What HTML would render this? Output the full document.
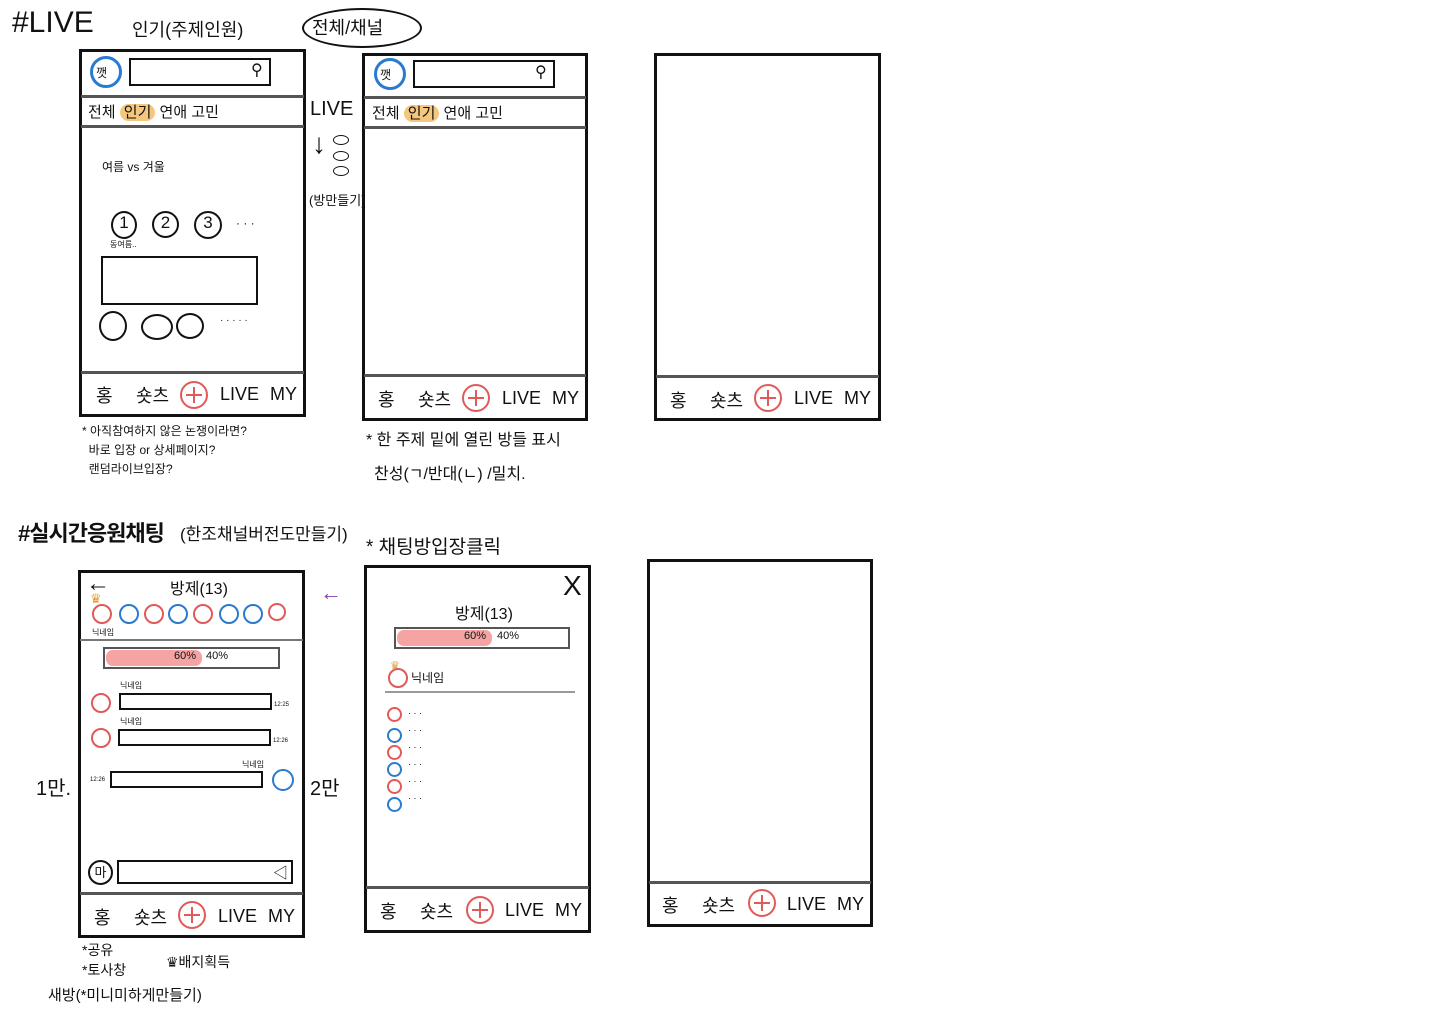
<!DOCTYPE html>
<html><head><meta charset="utf-8"><style>
body{margin:0;width:1440px;height:1018px;background:#fff;position:relative;overflow:hidden;font-family:"Liberation Sans","Noto Sans CJK KR",sans-serif;color:#111}
.a{position:absolute}
.f{position:absolute;border:3px solid #111;box-sizing:border-box}
.hl{position:absolute;height:3px;background:#555}
.t{position:absolute;white-space:nowrap}
.c{position:absolute;border-radius:50%;box-sizing:border-box}
.r{border:2px solid #e05a5a}.b{border:2px solid #2a7ad0}.k{border:2px solid #111}
.nav{position:absolute;font-size:18px;white-space:nowrap}
.plus{position:absolute;width:28px;height:28px;border:2px solid #e05a5a;border-radius:50%;box-sizing:border-box}
.plus:before{content:"";position:absolute;left:4px;right:4px;top:11px;height:2px;background:#e05a5a}
.plus:after{content:"";position:absolute;top:4px;bottom:4px;left:11px;width:2px;background:#e05a5a}
.box{position:absolute;border:2px solid #111;box-sizing:border-box}
.pill{background:#f5c77e;border-radius:9px;padding:0 4px}
</style></head><body>

<div class="t" style="left:12px;top:6px;font-size:30px">#LIVE</div>
<div class="t" style="left:132px;top:16px;font-size:18px">인기(주제인원)</div>
<div class="a" style="left:302px;top:8px;width:116px;height:36px;border:2px solid #111;border-radius:50%"></div>
<div class="t" style="left:312px;top:14px;font-size:18px">전체/채널</div>

<!-- frame 1 -->
<div class="f" style="left:79px;top:49px;width:227px;height:368px"></div>
<div class="c b" style="left:90px;top:56px;width:32px;height:32px;border-width:3px"></div>
<div class="t" style="left:96px;top:64px;font-size:12px">깻</div>
<div class="box" style="left:129px;top:58px;width:142px;height:28px"></div>
<div class="t" style="left:251px;top:60px;font-size:16px">⚲</div>
<div class="hl" style="left:81px;top:95px;width:223px"></div>
<div class="t" style="left:88px;top:101px;font-size:15px">전체 <span class="pill">인기</span> 연애 고민</div>
<div class="hl" style="left:81px;top:125px;width:223px"></div>
<div class="t" style="left:102px;top:158px;font-size:12px">여름 vs 겨울</div>
<div class="c k" style="left:111px;top:211px;width:26px;height:28px;text-align:center;font-size:17px">1</div>
<div class="c k" style="left:152px;top:211px;width:27px;height:27px;text-align:center;font-size:17px">2</div>
<div class="c k" style="left:194px;top:211px;width:28px;height:28px;text-align:center;font-size:17px">3</div>
<div class="t" style="left:236px;top:216px;font-size:12px">· · ·</div>
<div class="t" style="left:110px;top:239px;font-size:8px">동여름..</div>
<div class="box" style="left:101px;top:256px;width:157px;height:49px"></div>
<div class="c k" style="left:99px;top:311px;width:28px;height:30px"></div>
<div class="c k" style="left:141px;top:314px;width:32px;height:26px"></div>
<div class="c k" style="left:176px;top:313px;width:28px;height:26px"></div>
<div class="t" style="left:220px;top:315px;font-size:10px">· · · · ·</div>
<div class="hl" style="left:81px;top:371px;width:223px"></div>
<div class="nav" style="left:96px;top:382px">홍</div>
<div class="nav" style="left:136px;top:382px">숏츠</div>
<div class="plus" style="left:180px;top:381px"></div>
<div class="nav" style="left:220px;top:384px">LIVE</div>
<div class="nav" style="left:270px;top:384px">MY</div>
<div class="t" style="left:82px;top:422px;font-size:12px;line-height:19px">* 아직참여하지 않은 논쟁이라면?<br>&nbsp;&nbsp;바로 입장 or 상세페이지?<br>&nbsp;&nbsp;랜덤라이브입장?</div>

<div class="t" style="left:310px;top:98px;font-size:20px">LIVE</div>
<div class="t" style="left:312px;top:128px;font-size:28px">↓</div>
<div class="c k" style="left:333px;top:135px;width:16px;height:10px;border-width:1.5px"></div>
<div class="c k" style="left:333px;top:151px;width:16px;height:10px;border-width:1.5px"></div>
<div class="c k" style="left:333px;top:166px;width:16px;height:10px;border-width:1.5px"></div>
<div class="t" style="left:309px;top:190px;font-size:13px">(방만들기)</div>

<!-- frame 2 -->
<div class="f" style="left:362px;top:53px;width:226px;height:368px"></div>
<div class="c b" style="left:374px;top:58px;width:32px;height:32px;border-width:3px"></div>
<div class="t" style="left:380px;top:66px;font-size:12px">깻</div>
<div class="box" style="left:413px;top:60px;width:142px;height:28px"></div>
<div class="t" style="left:535px;top:62px;font-size:16px">⚲</div>
<div class="hl" style="left:364px;top:96px;width:222px"></div>
<div class="t" style="left:372px;top:102px;font-size:15px">전체 <span class="pill">인기</span> 연애 고민</div>
<div class="hl" style="left:364px;top:126px;width:222px"></div>
<div class="hl" style="left:364px;top:374px;width:222px"></div>
<div class="nav" style="left:378px;top:386px">홍</div>
<div class="nav" style="left:418px;top:386px">숏츠</div>
<div class="plus" style="left:462px;top:384px"></div>
<div class="nav" style="left:502px;top:388px">LIVE</div>
<div class="nav" style="left:552px;top:388px">MY</div>
<div class="t" style="left:366px;top:426px;font-size:16px">* 한 주제 밑에 열린 방들 표시</div>
<div class="t" style="left:374px;top:460px;font-size:16px">찬성(ㄱ/반대(ㄴ) /밀치.</div>

<!-- frame 3 -->
<div class="f" style="left:654px;top:53px;width:227px;height:368px"></div>
<div class="hl" style="left:656px;top:375px;width:223px"></div>
<div class="nav" style="left:670px;top:387px">홍</div>
<div class="nav" style="left:710px;top:387px">숏츠</div>
<div class="plus" style="left:754px;top:384px"></div>
<div class="nav" style="left:794px;top:388px">LIVE</div>
<div class="nav" style="left:844px;top:388px">MY</div>

<!-- section 2 -->
<div class="t" style="left:18px;top:516px;font-size:22px;font-weight:bold;letter-spacing:-1px">#실시간응원채팅</div>
<div class="t" style="left:180px;top:520px;font-size:17px">(한조채널버전도만들기)</div>
<div class="t" style="left:366px;top:532px;font-size:19px">* 채팅방입장클릭</div>

<!-- frame 4 -->
<div class="f" style="left:78px;top:570px;width:227px;height:368px"></div>
<div class="t" style="left:86px;top:570px;font-size:24px">←</div>
<div class="t" style="left:170px;top:575px;font-size:16px">방제(13)</div>
<div class="t" style="left:90px;top:591px;font-size:13px;color:#e0a030">♛</div>
<div class="c r" style="left:92px;top:604px;width:20px;height:20px"></div>
<div class="c b" style="left:119px;top:604px;width:20px;height:20px"></div>
<div class="c r" style="left:144px;top:604px;width:20px;height:20px"></div>
<div class="c b" style="left:168px;top:604px;width:20px;height:20px"></div>
<div class="c r" style="left:193px;top:604px;width:20px;height:20px"></div>
<div class="c b" style="left:219px;top:604px;width:20px;height:20px"></div>
<div class="c b" style="left:243px;top:604px;width:20px;height:20px"></div>
<div class="c r" style="left:268px;top:603px;width:18px;height:18px"></div>
<div class="t" style="left:92px;top:627px;font-size:8px">닉네임</div>
<div class="hl" style="left:80px;top:639px;width:223px;height:2px;background:#777"></div>
<div class="box" style="left:103px;top:647px;width:177px;height:22px;border-color:#555"></div>
<div class="a" style="left:106px;top:650px;width:96px;height:16px;background:#f5a3a3;border-radius:7px"></div>
<div class="t" style="left:174px;top:650px;font-size:11px">60%</div>
<div class="t" style="left:206px;top:650px;font-size:11px">40%</div>
<div class="t" style="left:120px;top:680px;font-size:8px">닉네임</div>
<div class="c r" style="left:91px;top:693px;width:20px;height:20px"></div>
<div class="box" style="left:119px;top:693px;width:153px;height:17px"></div>
<div class="t" style="left:274px;top:702px;font-size:6px">12:25</div>
<div class="t" style="left:120px;top:716px;font-size:8px">닉네임</div>
<div class="c r" style="left:91px;top:728px;width:20px;height:20px"></div>
<div class="box" style="left:118px;top:729px;width:153px;height:17px"></div>
<div class="t" style="left:273px;top:738px;font-size:6px">12:26</div>
<div class="t" style="left:242px;top:759px;font-size:8px">닉네임</div>
<div class="t" style="left:90px;top:777px;font-size:6px">12:26</div>
<div class="box" style="left:110px;top:771px;width:153px;height:17px"></div>
<div class="c b" style="left:272px;top:769px;width:22px;height:22px"></div>
<div class="c k" style="left:88px;top:860px;width:25px;height:25px;font-size:13px;text-align:center;line-height:21px">마</div>
<div class="box" style="left:117px;top:860px;width:176px;height:24px"></div>
<div class="t" style="left:273px;top:862px;font-size:15px">◁</div>
<div class="hl" style="left:80px;top:892px;width:223px"></div>
<div class="nav" style="left:94px;top:904px">홍</div>
<div class="nav" style="left:134px;top:904px">숏츠</div>
<div class="plus" style="left:178px;top:901px"></div>
<div class="nav" style="left:218px;top:906px">LIVE</div>
<div class="nav" style="left:268px;top:906px">MY</div>
<div class="t" style="left:36px;top:772px;font-size:20px">1만.</div>
<div class="t" style="left:310px;top:772px;font-size:20px">2만</div>
<div class="t" style="left:320px;top:580px;font-size:22px;color:#8a3aaa">←</div>
<div class="t" style="left:82px;top:940px;font-size:14px;line-height:20px">*공유<br>*토사창</div>
<div class="t" style="left:166px;top:952px;font-size:14px">♛배지획득</div>
<div class="t" style="left:48px;top:984px;font-size:15px">새방(*미니미하게만들기)</div>

<!-- frame 5 -->
<div class="f" style="left:364px;top:565px;width:227px;height:368px"></div>
<div class="t" style="left:563px;top:570px;font-size:28px">X</div>
<div class="t" style="left:455px;top:600px;font-size:16px">방제(13)</div>
<div class="box" style="left:394px;top:627px;width:176px;height:22px;border-color:#555"></div>
<div class="a" style="left:397px;top:630px;width:95px;height:16px;background:#f5a3a3;border-radius:7px"></div>
<div class="t" style="left:464px;top:630px;font-size:11px">60%</div>
<div class="t" style="left:497px;top:630px;font-size:11px">40%</div>
<div class="t" style="left:390px;top:659px;font-size:11px;color:#e0a030">♛</div>
<div class="c r" style="left:388px;top:668px;width:20px;height:20px"></div>
<div class="t" style="left:411px;top:669px;font-size:12px">닉네임</div>
<div class="hl" style="left:385px;top:691px;width:190px;height:2px;background:#999"></div>
<div class="c r" style="left:387px;top:707px;width:15px;height:15px"></div>
<div class="c b" style="left:387px;top:728px;width:15px;height:15px"></div>
<div class="c r" style="left:387px;top:745px;width:15px;height:15px"></div>
<div class="c b" style="left:387px;top:762px;width:15px;height:15px"></div>
<div class="c r" style="left:387px;top:779px;width:15px;height:15px"></div>
<div class="c b" style="left:387px;top:797px;width:15px;height:15px"></div>
<div class="t" style="left:408px;top:705px;font-size:9px;line-height:17px">· · ·<br>· · ·<br>· · ·<br>· · ·<br>· · ·<br>· · ·</div>
<div class="hl" style="left:366px;top:886px;width:223px"></div>
<div class="nav" style="left:380px;top:898px">홍</div>
<div class="nav" style="left:420px;top:898px">숏츠</div>
<div class="plus" style="left:466px;top:896px"></div>
<div class="nav" style="left:505px;top:900px">LIVE</div>
<div class="nav" style="left:555px;top:900px">MY</div>

<!-- frame 6 -->
<div class="f" style="left:647px;top:559px;width:226px;height:368px"></div>
<div class="hl" style="left:649px;top:881px;width:222px"></div>
<div class="nav" style="left:662px;top:892px">홍</div>
<div class="nav" style="left:702px;top:892px">숏츠</div>
<div class="plus" style="left:748px;top:889px"></div>
<div class="nav" style="left:787px;top:894px">LIVE</div>
<div class="nav" style="left:837px;top:894px">MY</div>
</body></html>
